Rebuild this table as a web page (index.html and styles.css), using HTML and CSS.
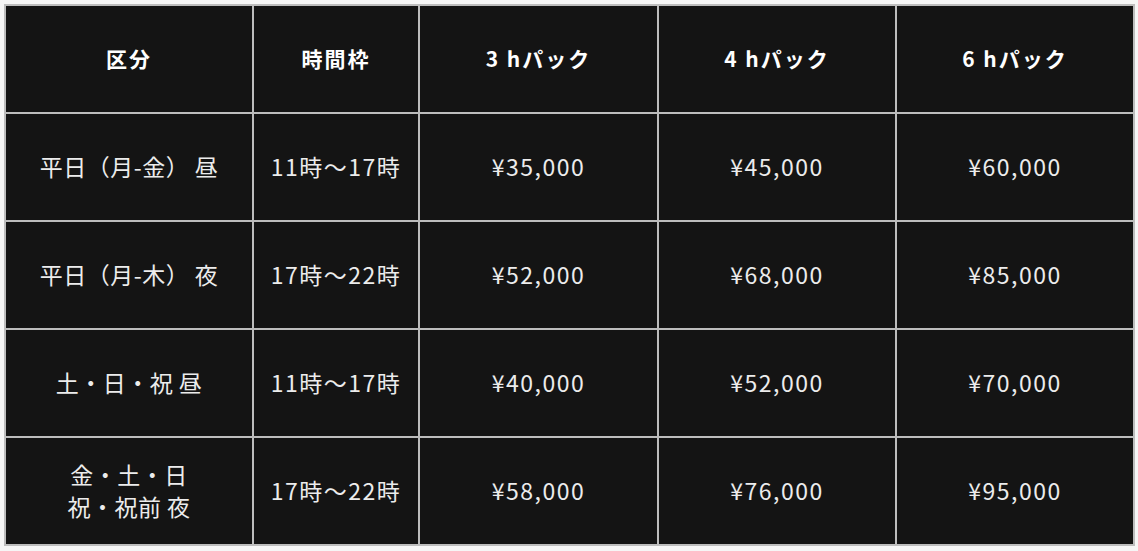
FILE: index.html
```html
<!DOCTYPE html>
<html lang="ja">
<head>
<meta charset="utf-8">
<link rel="stylesheet" href="styles.css">
</head>
<body>
<table class="price">
  <colgroup>
    <col class="c1"><col class="c2"><col class="c3"><col class="c4"><col class="c5">
  </colgroup>
  <thead>
    <tr>
      <th>区分</th>
      <th>時間枠</th>
      <th>3 hパック</th>
      <th>4 hパック</th>
      <th>6 hパック</th>
    </tr>
  </thead>
  <tbody>
    <tr>
      <td>平日（月-金） 昼</td>
      <td class="num">11時〜17時</td>
      <td class="num">¥35,000</td>
      <td class="num">¥45,000</td>
      <td class="num">¥60,000</td>
    </tr>
    <tr>
      <td>平日（月-木） 夜</td>
      <td class="num">17時〜22時</td>
      <td class="num">¥52,000</td>
      <td class="num">¥68,000</td>
      <td class="num">¥85,000</td>
    </tr>
    <tr>
      <td>土・日・祝 昼</td>
      <td class="num">11時〜17時</td>
      <td class="num">¥40,000</td>
      <td class="num">¥52,000</td>
      <td class="num">¥70,000</td>
    </tr>
    <tr>
      <td>金・土・日<br>祝・祝前 夜</td>
      <td class="num">17時〜22時</td>
      <td class="num">¥58,000</td>
      <td class="num">¥76,000</td>
      <td class="num">¥95,000</td>
    </tr>
  </tbody>
</table>
</body>
</html>
```
FILE: styles.css
```css
html, body {
  margin: 0;
  padding: 0;
  background: #f6f6f6;
}
body {
  padding: 4px 0 0 4px;
  font-family: "Noto Sans CJK JP", "Noto Sans", sans-serif;
}
.price {
  border-collapse: collapse;
  width: 1129px;
  table-layout: fixed;
  background: #141414;
  color: #ececec;
  border: 2px solid #c9c9c9;
}
.c1 { width: 248px; }
.c2 { width: 166px; }
.c3 { width: 239px; }
.c4 { width: 238px; }
.c5 { width: 238px; }
.price th,
.price td {
  border: 2px solid #bdbdbd;
  height: 103px;
  padding: 0 0 3px 0;
  text-align: center;
  vertical-align: middle;
}
.price th {
  font-size: 21px;
  font-weight: 700;
  letter-spacing: 2px;
  color: #ffffff;
}
.price td {
  font-size: 23px;
  font-weight: 400;
  line-height: 32px;
  letter-spacing: 0.5px;
}
.price td.num {
  letter-spacing: 1.5px;
}
```
